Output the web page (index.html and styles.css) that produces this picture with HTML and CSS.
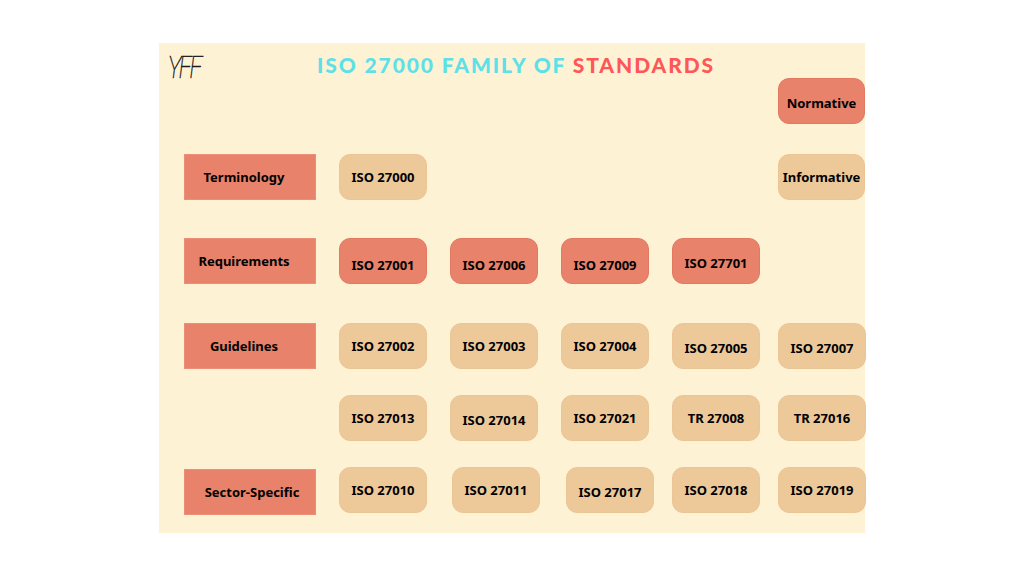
FILE: index.html
```html
<!DOCTYPE html>
<html lang="en">
<head>
<meta charset="utf-8">
<title>ISO 27000 Family of Standards</title>
<link rel="stylesheet" href="styles.css">
</head>
<body>
<main class="panel">
  <header class="header">
    <div class="logo">YFF</div>
    <h1 class="title"><span class="title-cyan">ISO 27000 FAMILY OF</span> <span class="title-red">STANDARDS</span></h1>
    <div class="spacer"></div>
  </header>
  <section class="grid">
    <!-- row 1 -->
    <div class="cell box dark legend r1 c6 low">Normative</div>
    <!-- row 2 -->
    <div class="label r2">Terminology</div>
    <div class="cell box light r2 c2">ISO 27000</div>
    <div class="cell box light legend r2 c6">Informative</div>
    <!-- row 3 -->
    <div class="label r3">Requirements</div>
    <div class="cell box dark r3 c2 low2">ISO 27001</div>
    <div class="cell box dark r3 c3 low2">ISO 27006</div>
    <div class="cell box dark r3 c4 low2">ISO 27009</div>
    <div class="cell box dark r3 c5 low">ISO 27701</div>
    <!-- row 4 -->
    <div class="label r4">Guidelines</div>
    <div class="cell box light r4 c2">ISO 27002</div>
    <div class="cell box light r4 c3">ISO 27003</div>
    <div class="cell box light r4 c4">ISO 27004</div>
    <div class="cell box light r4 c5 low">ISO 27005</div>
    <div class="cell box light r4 c6 low">ISO 27007</div>
    <!-- row 5 -->
    <div class="cell box light r5 c2">ISO 27013</div>
    <div class="cell box light r5 c3 low">ISO 27014</div>
    <div class="cell box light r5 c4">ISO 27021</div>
    <div class="cell box light r5 c5">TR 27008</div>
    <div class="cell box light r5 c6">TR 27016</div>
    <!-- row 6 -->
    <div class="label r6 label-centered">Sector-Specific</div>
    <div class="cell box light r6 c2 up">ISO 27010</div>
    <div class="cell box light r6 c3 up shift2">ISO 27011</div>
    <div class="cell box light r6 c4 up shift5 low">ISO 27017</div>
    <div class="cell box light r6 c5 up">ISO 27018</div>
    <div class="cell box light r6 c6 up">ISO 27019</div>
  </section>
</main>
</body>
</html>
```

FILE: styles.css
```css
* {
  box-sizing: border-box;
}

html, body {
  margin: 0;
  padding: 0;
  background: #ffffff;
}

body {
  width: 1024px;
  height: 576px;
  display: flex;
  align-items: center;
  justify-content: center;
  font-family: "Noto Sans", "DejaVu Sans", sans-serif;
}

.panel {
  width: 706px;
  height: 490px;
  background: #fef2d5;
  padding: 0 0 19px 25px;
  display: flex;
  flex-direction: column;
}

.header {
  height: 35px;
  margin-left: -25px;
  display: grid;
  grid-template-columns: 1fr auto 1fr;
  align-items: start;
}

.logo {
  padding: 10px 0 0 12px;
  font-family: "Roboto", "DejaVu Sans", sans-serif;
  font-weight: 100;
  font-style: italic;
  font-size: 32px;
  line-height: 28px;
  letter-spacing: -3px;
  color: #1a1a1a;
  transform: scaleX(0.72);
  transform-origin: left top;
  -webkit-text-stroke: 0.5px #1a1a1a;
}

.title {
  margin: 0;
  padding-top: 10px;
  font-family: "Lato", "Open Sans", sans-serif;
  font-weight: 900;
  font-size: 21px;
  line-height: 24px;
  letter-spacing: 1.9px;
  white-space: nowrap;
  transform: translateX(4px);
}

.title-cyan {
  color: #5ce1e6;
}

.title-red {
  color: #ff5757;
}

.grid {
  flex: 1;
  display: grid;
  grid-template-columns: 155px 111px 111px 111px 106px 87px;
  grid-template-rows: 76px 84px 85px 72px 73px 46px;
}

.r1 { grid-row: 1; }
.r2 { grid-row: 2; }
.r3 { grid-row: 3; }
.r4 { grid-row: 4; }
.r5 { grid-row: 5; }
.r6 { grid-row: 6; }
.c2 { grid-column: 2; }
.c3 { grid-column: 3; }
.c4 { grid-column: 4; }
.c5 { grid-column: 5; }
.c6 { grid-column: 6; }

.label {
  grid-column: 1;
  align-self: start;
  width: 132px;
  height: 46px;
  background: #e8826a;
  border: 1px solid #ec8f78;
  display: flex;
  align-items: center;
  justify-content: center;
  padding-right: 12px;
  font-size: 13px;
  font-weight: 700;
  color: #000000;
}

.label-centered {
  padding-right: 0;
  padding-left: 4px;
  margin-top: 1px;
}

.box {
  align-self: start;
  width: 88px;
  height: 46px;
  border-radius: 11px;
  display: flex;
  align-items: center;
  justify-content: center;
  font-size: 13px;
  font-weight: 700;
  color: #000000;
  white-space: nowrap;
}

.legend {
  width: 87px;
  font-size: 13px;
}

.dark {
  background: #e8826a;
  border: 1px solid #e27a61;
}

.light {
  background: #edc899;
  border: 1px solid #ecc596;
}

.low {
  padding-top: 3px;
}

.low2 {
  padding-top: 7px;
}

.up {
  margin-top: -1px;
}

.shift2 {
  margin-left: 2px;
}

.shift5 {
  margin-left: 5px;
}
```
